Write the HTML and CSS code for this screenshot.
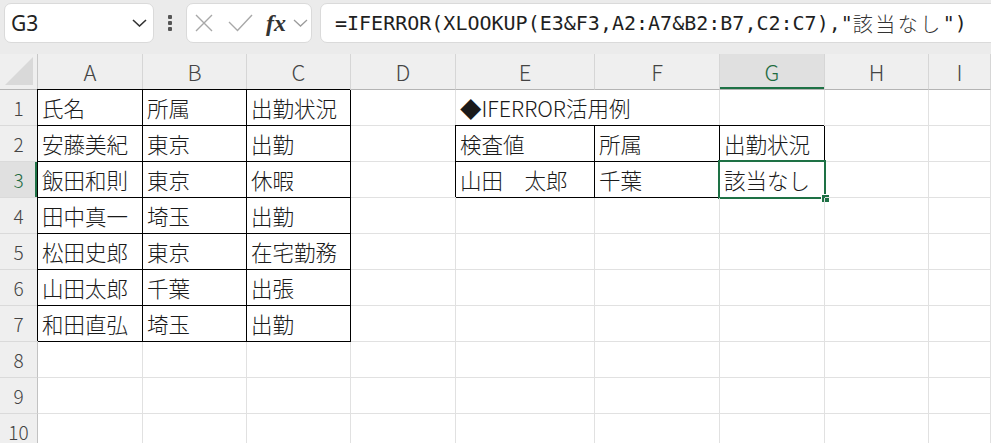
FILE: index.html
```html
<!DOCTYPE html>
<html lang="ja">
<head>
    <meta charset="UTF-8">
    <title>IFERROR活用例</title>
    <link rel="stylesheet" href="styles.css">
</head>
<body>
    <div class="toolbar">
        <div class="namebox">
            <span>G3</span>
            <svg width="15" height="8" viewBox="0 0 15 8"><path d="M1 1L7.5 7L14 1" fill="none" stroke="#333" stroke-width="1.6"/></svg>
        </div>
        <div class="grip"><i></i><i></i><i></i></div>
        <div class="fxbox">
            <svg class="ico-x" width="18" height="18" viewBox="0 0 18 18"><path d="M1 1L17 17M17 1L1 17" fill="none" stroke="#a8a8a8" stroke-width="1.4"/></svg>
            <svg class="ico-ok" width="25" height="18" viewBox="0 0 25 18"><path d="M1 8L9.5 16.5L24 1" fill="none" stroke="#a8a8a8" stroke-width="1.4"/></svg>
            <span class="fx">fx</span>
            <svg class="ico-dd" width="15" height="8" viewBox="0 0 15 8"><path d="M1 1L7.5 7L14 1" fill="none" stroke="#9c9c9c" stroke-width="1.3"/></svg>
        </div>
        <div class="formula">=IFERROR(XLOOKUP(E3&amp;F3,A2:A7&amp;B2:B7,C2:C7),"<span class="jp">該当なし</span>")</div>
    </div>

    <div class="sheet">
        <!-- column headers -->
        <div class="corner"><svg width="30" height="30" viewBox="0 0 30 30"><path d="M1 29H29V1Z" fill="#d9d9d9"/></svg></div>
        <div class="ch">A</div><div class="ch">B</div><div class="ch">C</div><div class="ch">D</div><div class="ch">E</div>
        <div class="ch">F</div><div class="ch on">G</div><div class="ch">H</div><div class="ch">I</div>

        <!-- 1 -->
        <div class="rh">1</div>
        <div class="c t">氏名</div><div class="c t">所属</div><div class="c t">出勤状況</div><div class="c"></div>
        <div class="c ov">◆IFERROR活用例</div><div class="c"></div><div class="c"></div><div class="c"></div><div class="c"></div>

        <!-- 2 -->
        <div class="rh">2</div>
        <div class="c t">安藤美紀</div><div class="c t">東京</div><div class="c t">出勤</div><div class="c"></div>
        <div class="c t">検査値</div><div class="c t">所属</div><div class="c t">出勤状況</div><div class="c"></div><div class="c"></div>

        <!-- 3 -->
        <div class="rh on">3</div>
        <div class="c t">飯田和則</div><div class="c t">東京</div><div class="c t">休暇</div><div class="c"></div>
        <div class="c t">山田　太郎</div><div class="c t">千葉</div>
        <div class="c t active">該当なし<span class="cursor"><b></b></span></div>
        <div class="c"></div><div class="c"></div>

        <!-- 4 -->
        <div class="rh">4</div>
        <div class="c t">田中真一</div><div class="c t">埼玉</div><div class="c t">出勤</div><div class="c"></div>
        <div class="c"></div><div class="c"></div><div class="c"></div><div class="c"></div><div class="c"></div>

        <!-- 5 -->
        <div class="rh">5</div>
        <div class="c t">松田史郎</div><div class="c t">東京</div><div class="c t">在宅勤務</div><div class="c"></div>
        <div class="c"></div><div class="c"></div><div class="c"></div><div class="c"></div><div class="c"></div>

        <!-- 6 -->
        <div class="rh">6</div>
        <div class="c t">山田太郎</div><div class="c t">千葉</div><div class="c t">出張</div><div class="c"></div>
        <div class="c"></div><div class="c"></div><div class="c"></div><div class="c"></div><div class="c"></div>

        <!-- 7 -->
        <div class="rh">7</div>
        <div class="c t">和田直弘</div><div class="c t">埼玉</div><div class="c t">出勤</div><div class="c"></div>
        <div class="c"></div><div class="c"></div><div class="c"></div><div class="c"></div><div class="c"></div>

        <!-- 8 - 10 -->
        <div class="rh">8</div>
        <div class="c"></div><div class="c"></div><div class="c"></div><div class="c"></div>
        <div class="c"></div><div class="c"></div><div class="c"></div><div class="c"></div><div class="c"></div>

        <div class="rh">9</div>
        <div class="c"></div><div class="c"></div><div class="c"></div><div class="c"></div>
        <div class="c"></div><div class="c"></div><div class="c"></div><div class="c"></div><div class="c"></div>

        <div class="rh">10</div>
        <div class="c"></div><div class="c"></div><div class="c"></div><div class="c"></div>
        <div class="c"></div><div class="c"></div><div class="c"></div><div class="c"></div><div class="c"></div>
    </div>
</body>
</html>
```

FILE: styles.css
```css
body {
    margin: 0;
    width: 991px;
    height: 443px;
    overflow: hidden;
    background-color: #fff;
    font-family: "Noto Sans CJK JP", "Noto Sans", sans-serif;
}

/* formula bar */
.toolbar {
    display: flex;
    align-items: flex-start;
    height: 54px;
    padding-top: 3px;
    box-sizing: border-box;
    background-color: #ebebeb;
    overflow: hidden;
}
.namebox,
.fxbox,
.formula {
    height: 40px;
    box-sizing: border-box;
    background-color: #fff;
    border: 1px solid #dadada;
    border-radius: 7px;
    display: flex;
    align-items: center;
}
.namebox {
    margin-left: 4px;
    width: 150px;
    justify-content: space-between;
    padding: 0 6px 0 6px;
    font-family: "Noto Sans", sans-serif;
    font-size: 21px;
    color: #222;
}
.grip {
    width: 32px;
    height: 40px;
    display: flex;
    flex-direction: column;
    align-items: center;
    justify-content: center;
    gap: 2px;
}
.grip i {
    width: 4px;
    height: 4px;
    border-radius: 1px;
    background-color: #555;
}
.fxbox {
    width: 126px;
    padding-left: 8px;
}
.ico-ok {
    margin-left: 15px;
}
.fx {
    margin-left: 13px;
    font-family: "Liberation Serif", serif;
    font-style: italic;
    font-weight: bold;
    font-size: 24px;
    line-height: 1;
    color: #333;
}
.ico-dd {
    margin-left: 7px;
}
.formula {
    flex: 1;
    margin-left: 8px;
    margin-right: -12px;
    padding-left: 14px;
    white-space: nowrap;
    font-family: "DejaVu Sans Mono", monospace;
    font-size: 20px;
    color: #1f1f1f;
}
.formula .jp {
    font-family: "Noto Sans CJK JP", sans-serif;
    font-weight: 300;
    font-size: 20px;
    letter-spacing: 2.5px;
    color: #333;
}

/* grid */
.sheet {
    display: grid;
    grid-template-columns: 38px 105px 104px 104px 105px 139px 125px 105px 104px 1fr;
    grid-auto-rows: 36px;
    background-color: #fff;
}
.corner,
.ch,
.rh {
    box-sizing: border-box;
    background-color: #efefef;
    color: #444;
    font-size: 19px;
    font-weight: 300;
    display: flex;
    align-items: center;
    justify-content: center;
}
.corner {
    border-right: 1px solid #c8c8c8;
    border-bottom: 1px solid #b4b4b4;
    align-items: flex-end;
    justify-content: flex-end;
    padding: 0 3px 3px 0;
}
.ch {
    border-right: 1px solid #d6d6d6;
    border-bottom: 1px solid #b4b4b4;
    font-size: 22px;
    padding-bottom: 1px;
}
.ch.on {
    background-color: #e0e0e0;
    color: #1e6b40;
    box-shadow: inset 0 -2px 0 #1e7145;
}
.rh {
    border-right: 1px solid #c2c2c2;
    border-bottom: 1px solid #dadada;
}
.rh.on {
    background-color: #e0e0e0;
    color: #1e6b40;
    box-shadow: inset -2px 0 0 #1e7145;
}

.c {
    position: relative;
    box-sizing: border-box;
    border-right: 1px solid #e1e1e1;
    border-bottom: 1px solid #e1e1e1;
    padding: 0 0 0 4px;
    display: flex;
    align-items: center;
    white-space: nowrap;
    font-size: 21.5px;
    font-weight: 300;
    color: #1a1a1a;
}
.c.ov {
    border-right-color: transparent;
}
.c.t {
    border-right-color: #000;
    border-bottom-color: #000;
    box-shadow: -1px -1px 0 #000;
}

/* selected cell */
.cursor {
    position: absolute;
    top: -2px;
    left: -2px;
    right: -2px;
    bottom: -2px;
    border: 2px solid #1e7145;
}
.cursor b {
    position: absolute;
    right: -5px;
    bottom: -5px;
    width: 7px;
    height: 7px;
    box-sizing: border-box;
    background-color: #1e7145;
    outline: 1px solid #fff;
}
```
